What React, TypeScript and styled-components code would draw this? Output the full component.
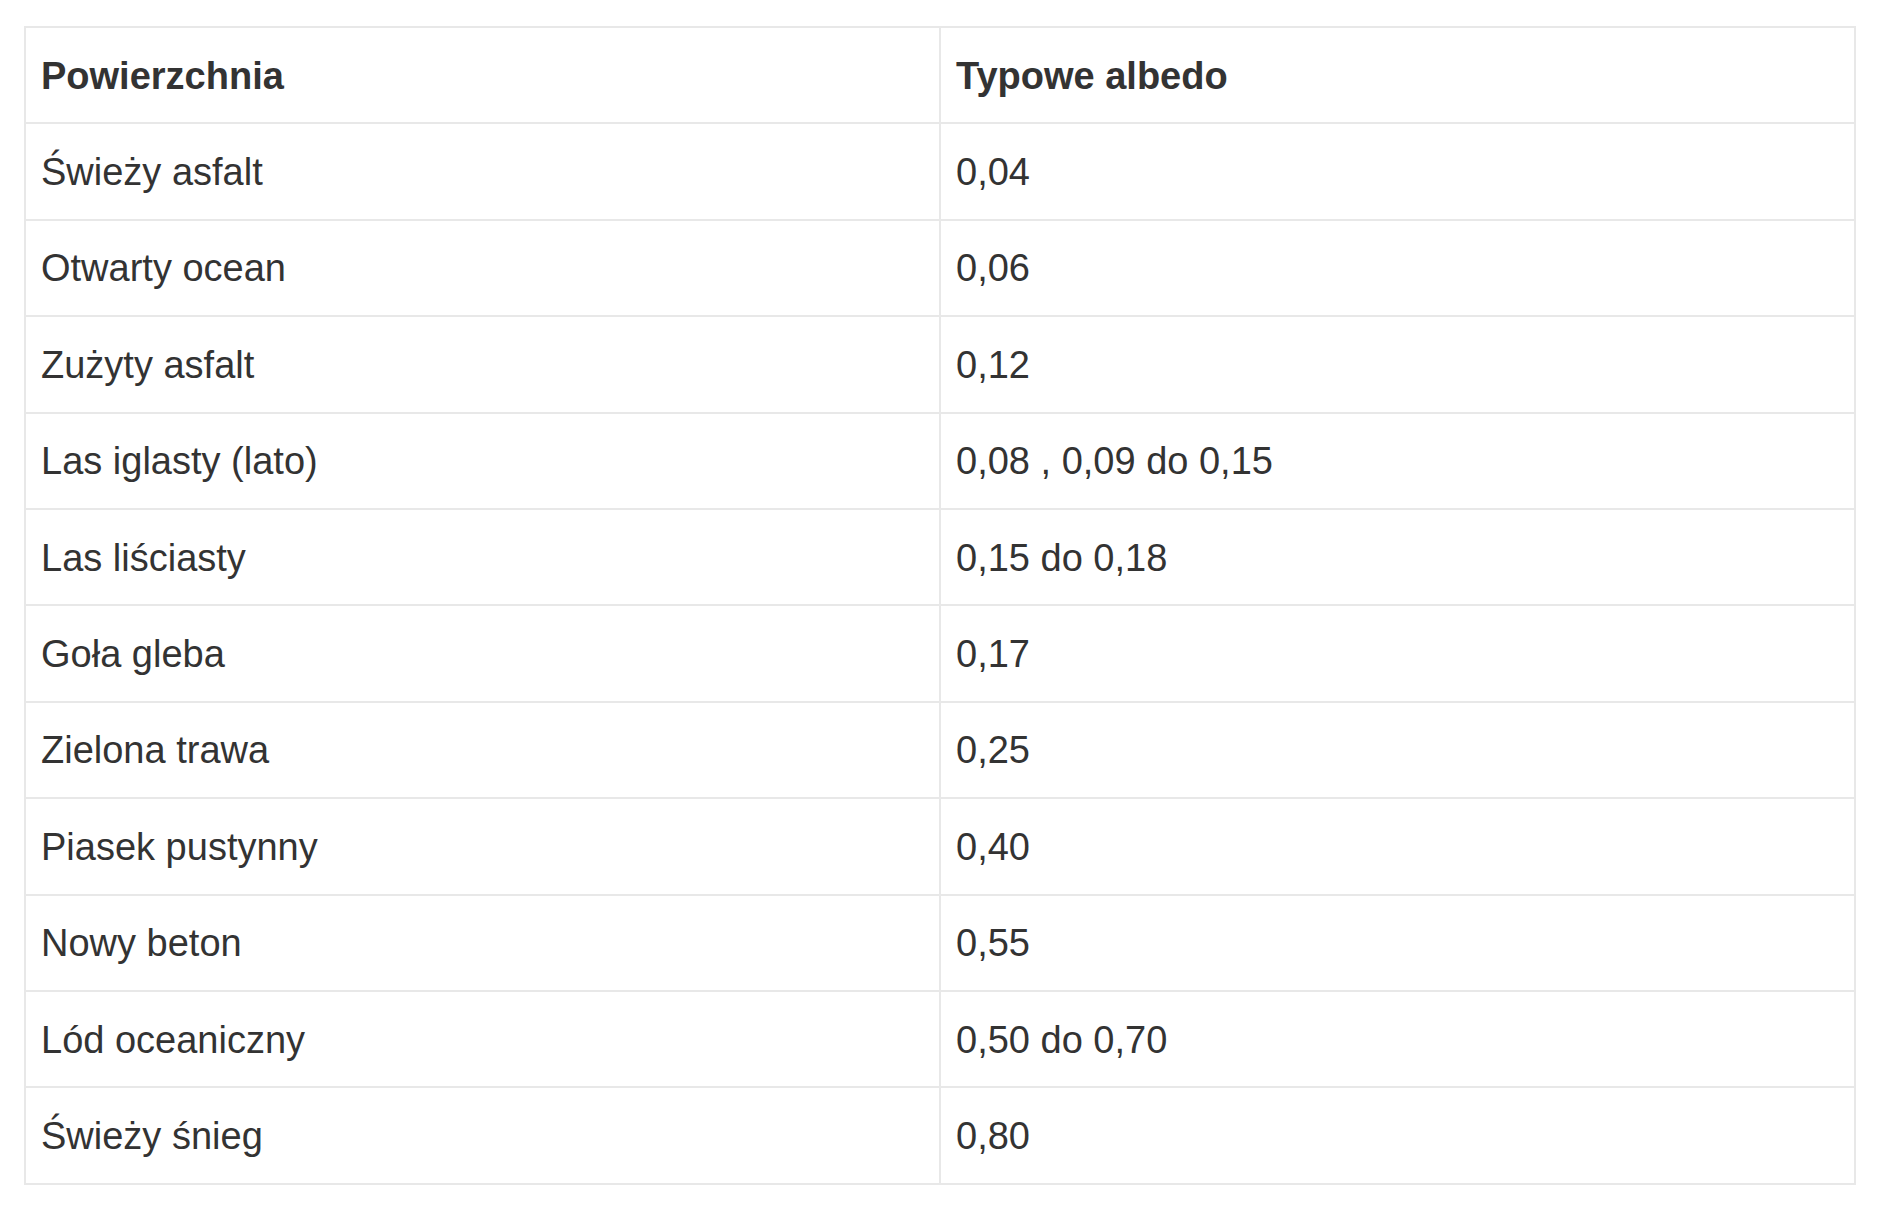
import React from "react";
import styled, { createGlobalStyle } from "styled-components";

const Global = createGlobalStyle`
  html, body { margin: 0; padding: 0; background: #ffffff; }
  body { font-family: "Liberation Sans", Arial, sans-serif; color: #333333; }
`;

const Page = styled.div`
  padding: 26px 28px 0 24px;
`;

const Table = styled.table`
  width: 100%;
  border-collapse: collapse;
  border: 2px solid #e6e6e6;
  font-family: "Liberation Sans", Arial, sans-serif;
  font-size: 38px;
  color: #333333;
`;

const Cell = styled.td<{ $head?: boolean }>`
  width: 50%;
  height: 96.4px;
  box-sizing: border-box;
  padding: 1px 16px 0 15px;
  border: 2px solid #e8e8e8;
  font-weight: ${(p) => (p.$head ? 700 : 400)};
  line-height: 44px;
  vertical-align: middle;
  text-align: left;
`;

const rows: [string, string][] = [
  ["Świeży asfalt", "0,04"],
  ["Otwarty ocean", "0,06"],
  ["Zużyty asfalt", "0,12"],
  ["Las iglasty (lato)", "0,08 , 0,09 do 0,15"],
  ["Las liściasty", "0,15 do 0,18"],
  ["Goła gleba", "0,17"],
  ["Zielona trawa", "0,25"],
  ["Piasek pustynny", "0,40"],
  ["Nowy beton", "0,55"],
  ["Lód oceaniczny", "0,50 do 0,70"],
  ["Świeży śnieg", "0,80"],
];

export default function App() {
  return (
    <>
      <Global />
      <Page>
        <Table>
          <tbody>
            <tr>
              <Cell $head>Powierzchnia</Cell>
              <Cell $head>Typowe albedo</Cell>
            </tr>
            {rows.map(([a, b]) => (
              <tr key={a}>
                <Cell>{a}</Cell>
                <Cell>{b}</Cell>
              </tr>
            ))}
          </tbody>
        </Table>
      </Page>
    </>
  );
}
